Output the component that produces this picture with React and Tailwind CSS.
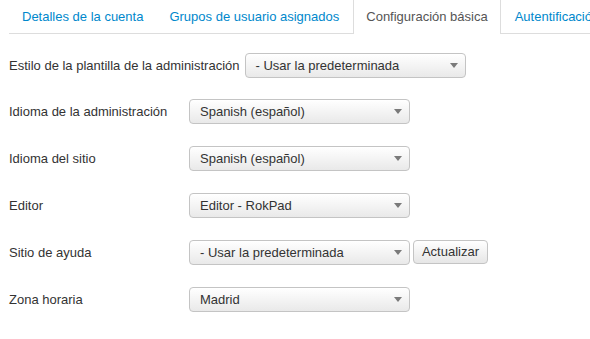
import React from "react";

function Arrow() {
  return (
    <svg width="8" height="5" viewBox="0 0 8 5" className="shrink-0">
      <path d="M0 0 L8 0 L4 5 Z" fill="#7a7a7a" />
    </svg>
  );
}

function Select({ value, width = "w-[221px]" }) {
  return (
    <div
      className={`${width} h-[25px] flex items-center justify-between pl-[10px] pr-[7px] border border-[#c4c4c4] rounded-[4px] bg-gradient-to-b from-white to-[#e9e9e9] text-[13px] text-[#333] shadow-[inset_0_1px_0_rgba(255,255,255,0.8)]`}
    >
      <span className="leading-none">{value}</span>
      <Arrow />
    </div>
  );
}

function Row({ label, value, extra, className = "" }) {
  return (
    <div className={`flex items-center ${className}`}>
      <div className="w-[180px] text-[13px] text-[#333]">{label}</div>
      <Select value={value} />
      {extra}
    </div>
  );
}

export default function App() {
  const tabs = [
    { name: "Detalles de la cuenta" },
    { name: "Grupos de usuario asignados" },
    { name: "Configuración básica", active: true },
    { name: "Autentificación de dos factores" },
  ];
  return (
    <div
      className="w-[590px] h-[339px] overflow-hidden bg-white"
      style={{ fontFamily: '"Liberation Sans", Arial, sans-serif' }}
    >
      <div className="pl-[9px]">
        <div className="flex border-b border-[#dddddd] h-[34px] whitespace-nowrap">
          <div className="flex pl-[1px]">
            {tabs.map((t) =>
              t.active ? (
                <div
                  key={t.name}
                  className="mr-[2px] h-[34px] -mb-[1px] px-[12px] flex items-center border-l border-r border-[#dddddd] bg-white text-[13px] text-[#555]"
                >
                  {t.name}
                </div>
              ) : (
                <div
                  key={t.name}
                  className="mr-[2px] h-[33px] px-[12px] flex items-center text-[13px] text-[#0088cc]"
                >
                  {t.name}
                </div>
              )
            )}
          </div>
        </div>

        <div className="flex items-center mt-[19px]">
          <div className="text-[13px] text-[#333] mr-[5px]">
            Estilo de la plantilla de la administración
          </div>
          <Select value="- Usar la predeterminada" />
        </div>

        <Row
          className="mt-[21px]"
          label="Idioma de la administración"
          value="Spanish (español)"
        />
        <Row
          className="mt-[22px]"
          label="Idioma del sitio"
          value="Spanish (español)"
        />
        <Row className="mt-[22px]" label="Editor" value="Editor - RokPad" />
        <Row
          className="mt-[22px]"
          label="Sitio de ayuda"
          value="- Usar la predeterminada"
          extra={
            <div className="ml-[3px] w-[75px] h-[24px] -mt-[1px] flex items-center justify-center border border-[#c4c4c4] rounded-[4px] bg-gradient-to-b from-white to-[#e6e6e6] text-[13px] text-[#333]">
              Actualizar
            </div>
          }
        />
        <Row className="mt-[22px]" label="Zona horaria" value="Madrid" />
      </div>
    </div>
  );
}
